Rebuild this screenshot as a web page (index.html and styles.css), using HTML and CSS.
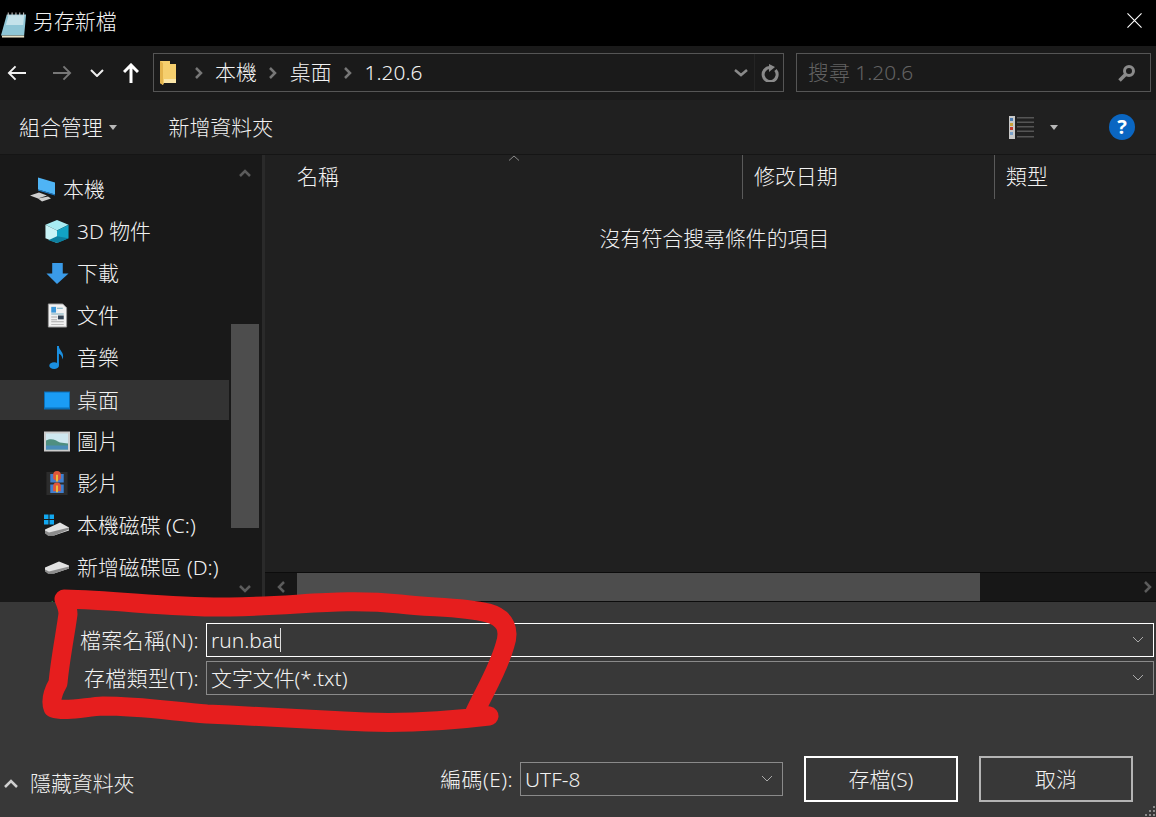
FILE: index.html
```html
<!DOCTYPE html>
<html lang="zh-Hant">
<head>
<meta charset="utf-8">
<title>另存新檔</title>
<link rel="stylesheet" href="styles.css">
</head>
<body>
<div class="dialog">
  <header class="titlebar">
    <svg class="app-icon" viewBox="0 0 28 28"><path fill="#8fc6d6" d="M6 3h20l-2 22H0z"/><path fill="#c4e2ea" d="M8 4h16l-1 10H5z"/><path fill="#e8e2c8" d="M1 25h23v2H1z"/><path fill="#d9d9d9" d="M7 1h1v4H7zM11 1h1v4h-1zM15 1h1v4h-1zM19 1h1v4h-1zM23 1h1v4h-1z"/></svg>
    <span class="title">另存新檔</span>
    <svg class="close" viewBox="0 0 16 16"><path d="M.5.5l15 15M15.500.5l-15 15" stroke="#fff" stroke-width="1.200" fill="none"/></svg>
  </header>

  <nav class="navbar">
    <svg class="nav-arrow" viewBox="0 0 20 16"><path d="M9 1L2 8l7 7M2 8h18" stroke="#f2f2f2" stroke-width="2" fill="none"/></svg>
    <svg class="nav-arrow forward" viewBox="0 0 20 16"><path d="M11 1l7 7-7 7M18 8H0" stroke="#777" stroke-width="2" fill="none"/></svg>
    <svg class="nav-down" viewBox="0 0 14 8"><path d="M1 1l6 6 6-6" stroke="#eee" stroke-width="2" fill="none"/></svg>
    <svg class="nav-up" viewBox="0 0 16 20"><path d="M1 9l7-7 7 7M8 2v18" stroke="#fff" stroke-width="3" fill="none"/></svg>
    <div class="address">
      <svg class="folder" viewBox="0 0 17 24"><path fill="#f5cf6e" d="M0 0h10v3h6v19H4l-1 2-3-2z"/><path fill="#e4b44c" d="M0 0l3 2v22l-3-2z"/><path fill="#fbe6a8" d="M4 18h12v4H4z"/></svg>
      <svg class="crumb-sep first-sep" viewBox="0 0 8 12"><path d="M1 1l5 5-5 5" stroke="#777" stroke-width="2.500" fill="none"/></svg>
      <span class="crumb">本機</span>
      <svg class="crumb-sep" viewBox="0 0 8 12"><path d="M1 1l5 5-5 5" stroke="#777" stroke-width="2.500" fill="none"/></svg>
      <span class="crumb">桌面</span>
      <svg class="crumb-sep" viewBox="0 0 8 12"><path d="M1 1l5 5-5 5" stroke="#777" stroke-width="2.500" fill="none"/></svg>
      <span class="crumb">1.20.6</span>
      <svg class="addr-down" viewBox="0 0 14 8"><path d="M1 1l6 5 6-5" stroke="#8a8a8a" stroke-width="2.500" fill="none"/></svg>
      <span class="addr-div"></span>
      <svg class="refresh" viewBox="0 0 18 18"><path d="M14.500 6A7 7 0 1 1 9 3.500" stroke="#8a8a8a" stroke-width="3" fill="none"/><path fill="#8a8a8a" d="M8 0v8l6-5z"/></svg>
    </div>
    <div class="search">
      <span class="search-text">搜尋 1.20.6</span>
      <svg class="magnifier" viewBox="0 0 18 18"><circle cx="11" cy="7" r="4.500" stroke="#8a8a8a" stroke-width="3" fill="none"/><path d="M7.500 10.500L1.500 16.500" stroke="#8a8a8a" stroke-width="3.500"/></svg>
    </div>
  </nav>

  <div class="toolbar">
    <span class="tool">組合管理</span>
    <span class="caret organize-caret"></span>
    <span class="tool new-folder">新增資料夾</span>
    <svg class="view-icon" viewBox="0 0 25 23"><rect width="6" height="23" fill="#c8c8c8"/><path fill="#4a7ab0" d="M1 2h3v3H1z"/><path fill="#c7a23a" d="M1 7h3v3H1z"/><path fill="#c0392b" d="M1 11h3v3H1z"/><path fill="#7aa0c8" d="M1 16h3v3H1z"/><path fill="#555" d="M8 1h17v1.500H8zM8 5.500h17V7H8zM8 10h17v1.500H8zM8 14.500h17V16H8zM8 20h17v1.500H8z"/></svg>
    <span class="caret view-caret"></span>
    <span class="help">?</span>
  </div>

  <main class="main">
    <aside class="sidebar">
      <ul class="tree">
        <li class="row top">
          <svg class="tree-icon" viewBox="0 0 26 24"><path fill="#4fb4f5" d="M8 0l17 5v12L8 12z"/><path fill="#1b7fd0" d="M8 12l17 5v1L8 13z"/><path fill="#cfcfcf" d="M0 18l9-3 8 3-9 3zM8 21l10-2 3 2-9 3z"/></svg>
          <span>本機</span>
        </li>
        <li class="row">
          <svg class="tree-icon" viewBox="0 0 26 26"><path fill="#a8ecf2" d="M13 1l12 5-12 6L1 6z"/><path fill="#c8f3f6" d="M1 6l12 6v13L1 20z"/><path fill="#12a3c4" d="M25 6l-12 6v13l12-5z"/><path fill="#0d7f9f" d="M13 18l12 2-12 5-9-3z"/></svg>
          <span>3D 物件</span>
        </li>
        <li class="row">
          <svg class="tree-icon" viewBox="0 0 26 26"><path fill="#3a9be8" d="M8 2h11v11h6L13 24 2 13h6z"/></svg>
          <span>下載</span>
        </li>
        <li class="row">
          <svg class="tree-icon" viewBox="0 0 26 26"><path fill="#f1f1f1" stroke="#999" d="M4 1h15l4 4v20H4z"/><path fill="#3b97d9" d="M7 4h5v6H7z"/><path fill="#7ab" d="M13 5h6v1h-6zM7 11h13v1H7z"/><path fill="#345" d="M14 13h6v4h-6z"/><path fill="#aaa" d="M7 14h6v1H7zM7 17h6v1H7zM7 19h13v1H7zM7 22h13v1H7z"/></svg>
          <span>文件</span>
        </li>
        <li class="row">
          <svg class="tree-icon" viewBox="0 0 26 26"><ellipse cx="10" cy="21.500" rx="5" ry="3.500" fill="#1a8fe0"/><path fill="#1a8fe0" d="M13 1h2c0 5 6 6 4 14-1-4-2-5-4-6v12h-2z"/></svg>
          <span>音樂</span>
        </li>
        <li class="row selected">
          <svg class="tree-icon" viewBox="0 0 26 20"><path fill="#0a6fb8" d="M0 1h26v18H0z"/><path fill="#1a9cf5" d="M1 2h24v15H1z"/></svg>
          <span>桌面</span>
        </li>
        <li class="row">
          <svg class="tree-icon" viewBox="0 0 26 20"><path fill="#ccc" d="M0 0h26v20H0z"/><path fill="#cfe8f0" d="M2 2h22v16H2z"/><path fill="#4f8f80" d="M2 9c6-3 10 0 14 2l8 1v6H2z"/><path fill="#4a8cb8" d="M2 14h22v4H2z"/></svg>
          <span>圖片</span>
        </li>
        <li class="row">
          <svg class="tree-icon" viewBox="0 0 26 26"><path fill="#2c2c2c" d="M2 1h22v24H2z"/><path fill="#3f7fd0" d="M6 3h14v9H6zM6 14h14v9H6z"/><path fill="#e0563a" d="M9 4a4 4 0 0 1 8 0v4l-4 3-4-3zM9 16a4 4 0 0 1 8 0v5H9z"/><path fill="#e8c040" d="M12 4h2v7h-2zM12 15h2v7h-2z"/></svg>
          <span>影片</span>
        </li>
        <li class="row">
          <svg class="tree-icon" viewBox="0 0 26 24"><path fill="#12a8f0" d="M0 1h4.500v4.500H0zM5.500 1H10v4.500H5.500zM0 6.500h4.500V11H0zM5.500 6.500H10V11H5.500z"/><path fill="#e2e2e2" d="M1 16l15-7 9 5v3L10 22H4l-3-3z"/><path fill="#8c8c8c" d="M1 17l4 2 20-5v2L10 22H4l-3-2z"/></svg>
          <span>本機磁碟 (C:)</span>
        </li>
        <li class="row">
          <svg class="tree-icon" viewBox="0 0 26 24"><path fill="#e2e2e2" d="M1 12l14-6 10 4v3L10 18H4l-3-3z"/><path fill="#8c8c8c" d="M1 14l4 2 20-5v2L10 18H4l-3-2z"/></svg>
          <span>新增磁碟區 (D:)</span>
        </li>
        <li class="row">
          <svg class="tree-icon" viewBox="0 0 26 26"><path fill="#1fa84a" d="M8 4l-6 9h12z"/></svg>
        </li>
      </ul>
      <div class="vscroll">
        <svg class="vs-arrow" viewBox="0 0 12 8"><path d="M1 7l5-5 5 5" stroke="#5c5c5c" stroke-width="2.500" fill="none"/></svg>
        <span class="vs-thumb"></span>
        <svg class="vs-arrow vs-down" viewBox="0 0 12 8"><path d="M1 1l5 5 5-5" stroke="#5c5c5c" stroke-width="2.500" fill="none"/></svg>
      </div>
    </aside>
    <span class="splitter"></span>
    <section class="pane">
      <div class="columns">
        <span class="col col-name"><span class="col-text">名稱</span><svg class="sort" viewBox="0 0 12 6"><path d="M1 5.500l5-4.500 5 4.500" stroke="#8a8a8a" fill="none"/></svg></span>
        <span class="col col-date"><span class="col-text">修改日期</span></span>
        <span class="col col-type"><span class="col-text">類型</span></span>
      </div>
      <div class="empty">沒有符合搜尋條件的項目</div>
      <div class="hscroll">
        <svg class="hs-arrow" viewBox="0 0 8 12"><path d="M7 1L2 6l5 5" stroke="#5c5c5c" stroke-width="2.500" fill="none"/></svg>
        <span class="hs-thumb"></span>
        <svg class="hs-arrow" viewBox="0 0 8 12"><path d="M1 1l5 5-5 5" stroke="#5c5c5c" stroke-width="2.500" fill="none"/></svg>
      </div>
    </section>
  </main>

  <footer class="bottom">
    <div class="fields">
      <label class="field-label">檔案名稱(N):</label>
      <div class="combo active"><span class="value">run.bat</span><span class="text-caret"></span><svg class="combo-down" viewBox="0 0 12 8"><path d="M1 1l5 5 5-5" stroke="#aaa" fill="none"/></svg></div>
      <label class="field-label">存檔類型(T):</label>
      <div class="combo"><span class="value">文字文件(*.txt)</span><svg class="combo-down" viewBox="0 0 12 8"><path d="M1 1l5 5 5-5" stroke="#aaa" fill="none"/></svg></div>
    </div>
    <div class="actions">
      <svg class="hide-icon" viewBox="0 0 14 9"><path d="M1 8l6-6 6 6" stroke="#d0d0d0" stroke-width="2.500" fill="none"/></svg>
      <span class="hide-text">隱藏資料夾</span>
      <span class="enc-label">編碼(E):</span>
      <div class="combo enc"><span class="value">UTF-8</span><svg class="combo-down" viewBox="0 0 12 8"><path d="M1 1l5 5 5-5" stroke="#aaa" fill="none"/></svg></div>
      <button class="btn primary">存檔(S)</button>
      <button class="btn">取消</button>
    </div>
    <svg class="grip" viewBox="0 0 12 12"><path fill="#8a8a8a" d="M9 1h2v2H9zM5 5h2v2H5zM9 5h2v2H9zM1 9h2v2H1zM5 9h2v2H5zM9 9h2v2H9z"/></svg>
  </footer>

  <svg class="scribble" viewBox="0 0 1156 817"><path d="M64 599C120 600 170 608 230 607C300 606 340 598 400 604C430 608 460 606 488 613C506 618 510 630 505 645C498 670 485 690 474 714L489 716C440 722 390 724 344 721C290 718 250 716 207 714C170 711 140 706 103 706C85 707 65 712 53 708C50 700 54 690 58 683C60 660 66 630 68 614C68 608 66 604 64 599" fill="none" stroke="#e61e1e" stroke-width="19" stroke-linecap="round" stroke-linejoin="round"/></svg>
</div>
</body>
</html>
```
FILE: styles.css
```css
* { box-sizing: border-box; }
html, body { margin: 0; padding: 0; }
body {
  width: 1156px;
  height: 817px;
  overflow: hidden;
  background: #383838;
  color: #f2f2f2;
  font-family: "Noto Sans", "Noto Sans CJK TC", sans-serif;
  font-size: 20.9px;
  font-weight: 300;
  line-height: 28px;
}
svg { display: block; flex: none; }
.dialog { position: relative; display: flex; flex-direction: column; width: 1156px; height: 817px; }

.titlebar { display: flex; align-items: center; height: 46px; flex: none; background: #000; padding: 0 14px 0 1px; }
.app-icon { width: 27px; height: 28px; margin-top: 3px; }
.title { margin-left: 5px; margin-top: -4px; }
.close { width: 15px; height: 15px; margin-left: auto; margin-top: -5px; }

.navbar { display: flex; align-items: center; height: 54px; flex: none; background: #1a1a1a; padding: 0 5px 1px 7px; }
.nav-arrow { width: 19px; height: 16px; }
.forward { margin-left: 27px; }
.nav-down { width: 14px; height: 8px; margin-left: 18px; }
.nav-up { width: 16px; height: 20px; margin-left: 19px; }
.address { display: flex; align-items: center; width: 631px; height: 39px; margin-left: 14px; border: 1px solid #555; padding-left: 6px; }
.folder { width: 17px; height: 24px; }
.crumb-sep { width: 8px; height: 12px; margin: 0 13px 0 12px; }
.crumb-sep.first-sep { margin: 0 12px 0 18px; }
.crumb { margin-top: -2px; }
.addr-down { width: 14px; height: 8px; margin-left: auto; }
.addr-div { width: 1px; height: 37px; background: #242424; margin-left: 6px; }
.refresh { width: 18px; height: 18px; margin: 0 4px 0 6px; }
.search { display: flex; align-items: center; width: 355px; height: 39px; margin-left: 12px; border: 1px solid #555; padding: 0 14px 0 11px; }
.search-text { color: #626262; margin-top: -2px; }
.magnifier { width: 18px; height: 18px; margin-left: auto; }

.toolbar { display: flex; align-items: center; height: 55px; flex: none; background: #202020; border-bottom: 1px solid #151515; padding: 0 21px 0 19px; }
.caret { width: 0; height: 0; border: 4.500px solid transparent; border-top: 5px solid #b8b8b8; border-bottom: 0; }
.organize-caret { margin-left: 6px; }
.new-folder { margin-left: 52px; }
.view-icon { width: 25px; height: 23px; margin-left: auto; }
.view-caret { margin-left: 16px; }
.help { display: flex; align-items: center; justify-content: center; width: 26px; height: 26px; margin-left: 51px; border-radius: 50%; background: #0a66c2; color: #fff; font-weight: 700; font-size: 20px; }

.main { display: flex; flex: 1; min-height: 0; background: #202020; }
.sidebar { display: flex; width: 262px; flex: none; background: #191919; overflow: hidden; }
.tree { list-style: none; width: 231px; flex: none; margin: 0; padding: 13px 0 0; height: 447px; overflow: hidden; }
.row { display: flex; align-items: center; height: 42px; padding-left: 44px; white-space: nowrap; }
.row.top { padding-left: 30px; }
.row.selected { width: 229px; height: 40px; margin-top: 2px; background: #333; }
.tree-icon { width: 26px; height: 25px; margin-right: 7px; }
.vscroll { display: flex; flex-direction: column; align-items: center; width: 28px; height: 447px; padding-top: 14px; }
.vs-arrow { width: 12px; height: 8px; }
.vs-thumb { width: 28px; height: 204px; margin-top: 147px; background: #4d4d4d; }
.vs-down { margin-top: 57px; }
.splitter { width: 3px; flex: none; background: #2a2a2a; }
.pane { display: flex; flex-direction: column; flex: 1; min-width: 0; }
.columns { display: flex; height: 44px; flex: none; }
.col { display: flex; align-items: center; position: relative; }
.col-text { margin-top: -2px; }
.col-name { width: 477px; padding-left: 32px; }
.col-date { width: 252px; padding-left: 11px; border-left: 1px solid #5a5a5a; }
.col-type { flex: 1; padding-left: 11px; border-left: 1px solid #5a5a5a; }
.sort { position: absolute; left: 243px; top: 0; width: 12px; height: 6px; }
.empty { flex: 1; text-align: center; padding: 25px 0 0 8px; }
.hscroll { display: flex; align-items: center; height: 30px; flex: none; background: #171717; border-top: 1px solid #0c0c0c; border-bottom: 1px solid #0c0c0c; padding: 0 4px 0 12px; }
.hs-arrow { width: 8px; height: 12px; }
.hs-thumb { width: 683px; height: 28px; background: #4d4d4d; margin: 0 164px 0 12px; }

.bottom { position: relative; display: flex; flex-direction: column; height: 215px; flex: none; background: #383838; padding: 21px 2px 15px 0; }
.fields { display: grid; grid-template-columns: 199px 948px; column-gap: 7px; row-gap: 4px; align-items: center; }
.field-label { text-align: right; white-space: nowrap; letter-spacing: .45px; }
.combo { display: flex; align-items: center; height: 34px; border: 1px solid #8a8a8a; padding: 0 9px 0 4px; position: relative; }
.combo.active { border-color: #fff; }
.value { white-space: nowrap; }
.text-caret { width: 1px; height: 24px; background: #ddd; }
.combo-down { width: 12px; height: 8px; margin-left: auto; }
.actions { display: flex; align-items: center; margin-top: auto; padding: 0 21px 0 4px; }
.hide-icon { width: 14px; height: 9px; margin-top: 8px; }
.hide-text { margin-left: 12px; margin-top: 8px; }
.enc-label { margin-left: auto; margin-right: 7px; letter-spacing: .45px; }
.combo.enc { width: 263px; height: 34px; }
.btn { width: 154px; height: 46px; margin-left: 21px; background: #383838; border: 2px solid #b4b4b4; color: #f2f2f2; font: inherit; padding: 0; }
.btn.primary { border-color: #fff; }
.grip { position: absolute; right: 0; bottom: 0; width: 12px; height: 12px; }
.scribble { position: absolute; left: 0; top: 0; width: 1156px; height: 817px; pointer-events: none; }
```
